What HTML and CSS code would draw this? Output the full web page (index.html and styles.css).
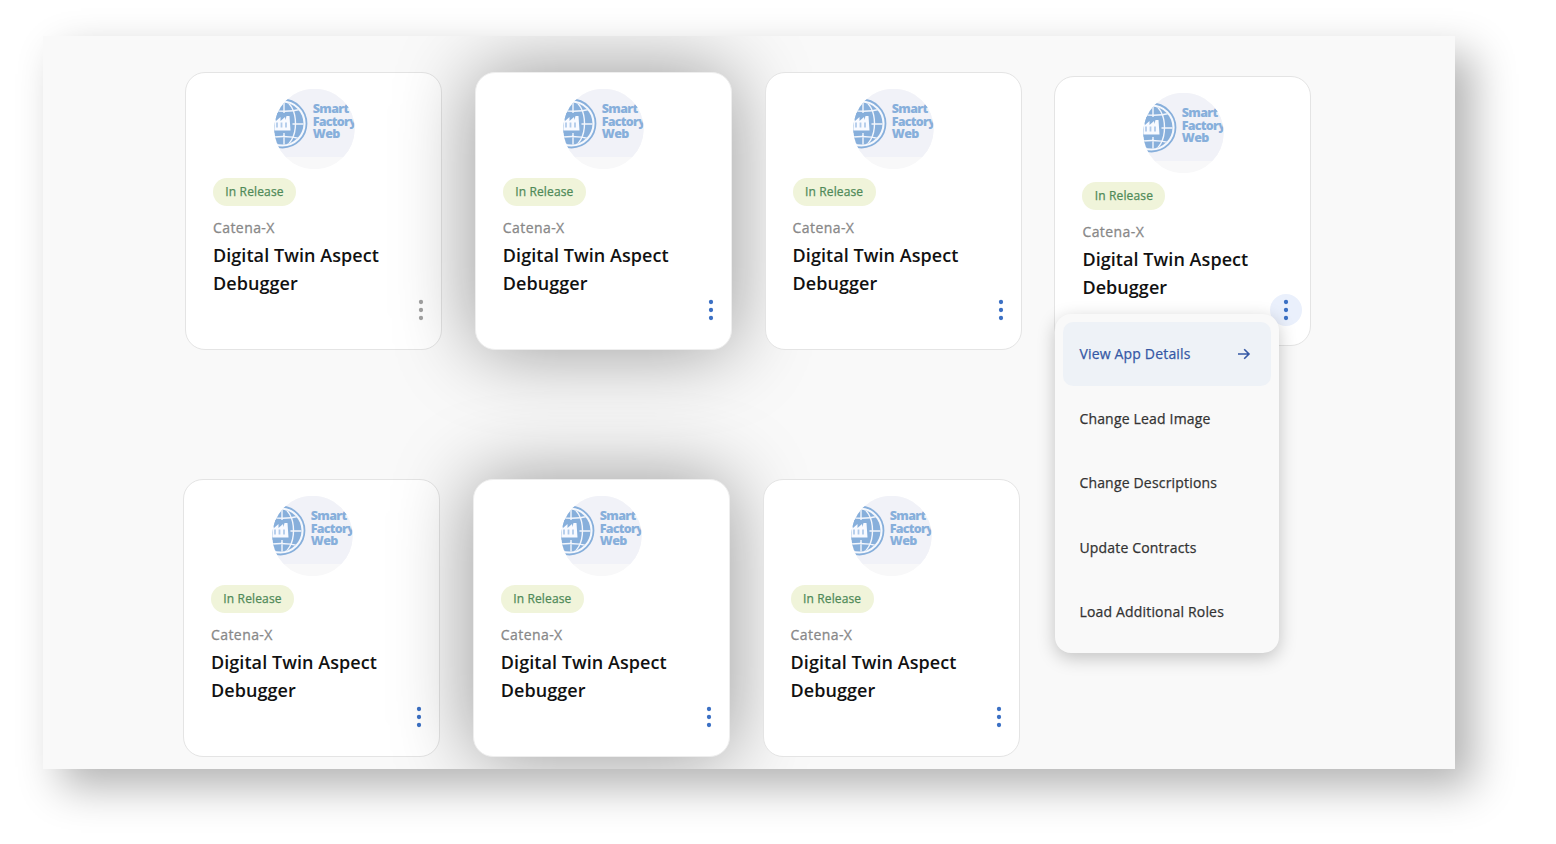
FILE: index.html
```
<!DOCTYPE html>
<html lang="en">
<head>
<meta charset="utf-8">
<title>App Overview</title>
<link rel="stylesheet" href="styles.css">
</head>
<body>
<svg class="defs" width="0" height="0" aria-hidden="true">
  <defs>
    <clipPath id="round"><circle cx="40.5" cy="40" r="40.2"/></clipPath>
    <clipPath id="globe"><circle cx="8.500" cy="34.500" r="21"/></clipPath>
    <symbol id="logo" viewBox="0 0 81 80">
      <g clip-path="url(#round)">
        <rect width="81" height="80" fill="#f8f8f9"/>
        <rect width="81" height="68" fill="#f1f2f8"/>
        <circle cx="8.500" cy="34.500" r="24" fill="#f5f8fd" stroke="#87afdb" stroke-width="1.800"/>
        <circle cx="8.500" cy="34.500" r="21" fill="#87afdb"/>
        <g clip-path="url(#globe)" fill="none" stroke="#f3f6fc" stroke-width="1.400">
          <path d="M10 12V58M-12 35H30M-10 19Q9 25 28 20M-10 50Q9 45 28 50"/>
          <ellipse cx="8.500" cy="34.500" rx="13" ry="23"/>
        </g>
        <path d="M-3 44V24H18.500V44Z" fill="#87afdb"/>
        <path d="M-2 41.500V32L2 28V32L6.500 28V32L11 28L11.500 31L12.500 27H15.500L16.500 41.500Z" fill="#f8faff"/>
        <path d="M3 33.500v5M7.500 33.500v5M12 33.500v5" stroke="#b0caea" stroke-width="1.800"/>
        <g class="logo-text">
          <text x="38.800" y="24" textLength="36.500">Smart</text>
          <text x="38.800" y="36.800" textLength="44">Factory</text>
          <text x="38.800" y="49.200" textLength="27.500">Web</text>
        </g>
      </g>
    </symbol>
    <symbol id="dots" viewBox="0 0 6 22"><circle cx="3" cy="3" r="2.150"/><circle cx="3" cy="11" r="2.150"/><circle cx="3" cy="19" r="2.150"/></symbol>
  </defs>
</svg>
<main class="panel">
  <section class="row row-first">
    <article class="card">
      <svg class="logo"><use href="#logo"/></svg><span class="chip">In Release</span>
      <p class="vendor">Catena-X</p><h2 class="title">Digital Twin Aspect Debugger</h2>
      <button class="more more-idle" aria-label="More"><svg><use href="#dots"/></svg></button>
    </article>
    <article class="card card-raised">
      <svg class="logo"><use href="#logo"/></svg><span class="chip">In Release</span>
      <p class="vendor">Catena-X</p><h2 class="title">Digital Twin Aspect Debugger</h2>
      <button class="more" aria-label="More"><svg><use href="#dots"/></svg></button>
    </article>
    <article class="card">
      <svg class="logo"><use href="#logo"/></svg><span class="chip">In Release</span>
      <p class="vendor">Catena-X</p><h2 class="title">Digital Twin Aspect Debugger</h2>
      <button class="more" aria-label="More"><svg><use href="#dots"/></svg></button>
    </article>
    <article class="card card-open">
      <svg class="logo"><use href="#logo"/></svg><span class="chip">In Release</span>
      <p class="vendor">Catena-X</p><h2 class="title">Digital Twin Aspect Debugger</h2>
      <button class="more more-active" aria-label="More"><svg><use href="#dots"/></svg></button>
      <nav class="menu">
        <a class="item item-active"><span>View App Details</span><svg class="arrow" viewBox="0 0 14 12"><path d="M1 6H12M7.200 1.200L12 6L7.200 10.800"/></svg></a>
        <a class="item">Change Lead Image</a>
        <a class="item">Change Descriptions</a>
        <a class="item">Update Contracts</a>
        <a class="item">Load Additional Roles</a>
      </nav>
    </article>
  </section>
  <section class="row row-second">
    <article class="card">
      <svg class="logo"><use href="#logo"/></svg><span class="chip">In Release</span>
      <p class="vendor">Catena-X</p><h2 class="title">Digital Twin Aspect Debugger</h2>
      <button class="more" aria-label="More"><svg><use href="#dots"/></svg></button>
    </article>
    <article class="card card-raised">
      <svg class="logo"><use href="#logo"/></svg><span class="chip">In Release</span>
      <p class="vendor">Catena-X</p><h2 class="title">Digital Twin Aspect Debugger</h2>
      <button class="more" aria-label="More"><svg><use href="#dots"/></svg></button>
    </article>
    <article class="card">
      <svg class="logo"><use href="#logo"/></svg><span class="chip">In Release</span>
      <p class="vendor">Catena-X</p><h2 class="title">Digital Twin Aspect Debugger</h2>
      <button class="more" aria-label="More"><svg><use href="#dots"/></svg></button>
    </article>
  </section>
</main>
</body>
</html>
```
FILE: styles.css
```
* { box-sizing: border-box; }
body {
  margin: 0;
  padding: 36px 0 0 43px;
  height: 844px;
  overflow: hidden;
  background: #fff;
  font-family: "Open Sans", "Liberation Sans", sans-serif;
}
.defs { position: absolute; }
.panel {
  width: 1412px;
  height: 732.5px;
  padding: 36px 0 0 142px;
  overflow: hidden;
  background: #f9f9f9;
  box-shadow: 18px 18px 40px rgba(0, 0, 0, .3);
}
.row { display: flex; align-items: flex-start; gap: 32.800px; }
.row-second { margin: 129px 0 0 -2px; }
.card {
  position: relative;
  display: flex;
  flex-direction: column;
  align-items: flex-start;
  width: 257px;
  height: 278px;
  padding: 16px 27px;
  border: 1px solid #e4e4e4;
  border-radius: 20px;
  background: #fff;
}
.card-raised { border-color: #eee; box-shadow: 0 0 80px rgba(0, 0, 0, .4); }
.card-open { height: 270px; margin-top: 4px; z-index: 2; }
.logo { width: 81px; height: 80px; margin-left: 60.500px; flex: none; }
.logo-text { font: 800 12.500px "Open Sans", sans-serif; fill: #87afdb; }
.chip {
  width: 83px;
  height: 28px;
  margin-top: 9px;
  border-radius: 14px;
  background: #f0f4da;
  color: #4f8a58;
  font-size: 12px;
  letter-spacing: .14px;
  line-height: 28px;
  text-align: center;
  -webkit-text-stroke: .25px currentColor;
}
.vendor {
  margin: 12px 0 0;
  color: #888;
  font-size: 14px;
  letter-spacing: .42px;
  line-height: 20px;
  -webkit-text-stroke: .3px currentColor;
}
.title {
  width: 190px;
  margin: 2.500px 0 0;
  color: #111;
  font-size: 18px;
  font-weight: 600;
  letter-spacing: .06px;
  line-height: 28px;
}
.more {
  position: absolute;
  right: 4px;
  bottom: 23px;
  display: flex;
  align-items: center;
  justify-content: center;
  width: 32px;
  height: 32px;
  padding: 0;
  border: 0;
  border-radius: 50%;
  background: none;
}
.more svg { width: 6px; height: 22px; fill: #3b70c4; }
.more-idle svg { fill: #a2a2a2; }
.more-active { right: 8.500px; bottom: 19px; background: #eaf0fc; }
.menu {
  position: absolute;
  top: 237px;
  left: 0;
  width: 224px;
  height: 339px;
  padding: 7.500px 8px;
  border-radius: 16px;
  background: #f9f9f9;
  box-shadow: 0 5px 18px rgba(0, 0, 0, .22);
}
.item {
  display: flex;
  align-items: center;
  justify-content: space-between;
  height: 64.500px;
  padding: 0 20px 0 16px;
  border-radius: 10px;
  color: #333;
  font-size: 14px;
  letter-spacing: .18px;
  white-space: nowrap;
  -webkit-text-stroke: .25px currentColor;
}
.item-active { background: #eef2f7; color: #3558a5; }
.arrow { width: 14px; height: 12px; fill: none; stroke: #3558a5; stroke-width: 1.600; }
```
